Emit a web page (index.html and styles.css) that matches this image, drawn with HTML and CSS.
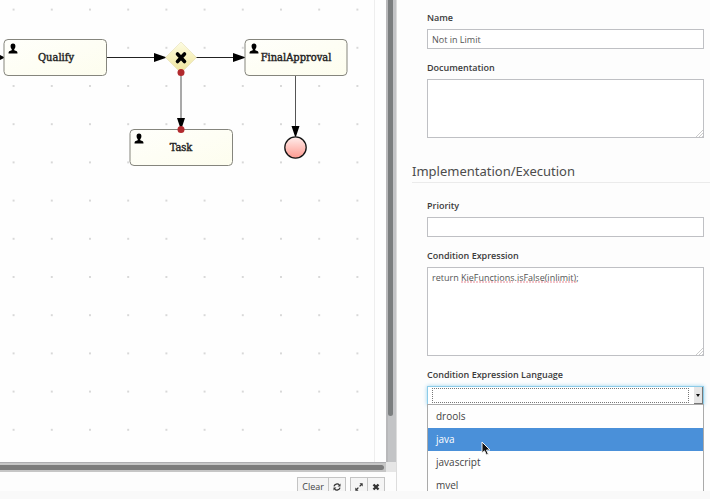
FILE: index.html
```html
<!DOCTYPE html>
<html lang="en">
<head>
<meta charset="utf-8">
<title>Process Designer</title>
<link rel="stylesheet" href="styles.css">
</head>
<body>
<div class="app">
  <main class="designer">
    <div class="viewport">
      <svg class="canvas" role="img" aria-label="Process diagram">
        <defs>
          <pattern id="grid" x="-6" y="-10" width="38.2" height="38.2" patternUnits="userSpaceOnUse">
            <circle cx="19.6" cy="19.6" r="0.8" fill="#a8a8a8"/>
          </pattern>
          <linearGradient id="task" x1="0" y1="0" x2="1" y2="1">
            <stop offset="0" stop-color="#fffffb"/><stop offset="1" stop-color="#fdfdee"/>
          </linearGradient>
          <linearGradient id="gate" x1="0" y1="0" x2="0" y2="1">
            <stop offset="0" stop-color="#fdfce2"/><stop offset="1" stop-color="#efe49a"/>
          </linearGradient>
          <linearGradient id="end" x1="0" y1="0" x2="0" y2="1">
            <stop offset="0" stop-color="#ffeeec"/><stop offset="1" stop-color="#ff9a90"/>
          </linearGradient>
          <symbol id="user" viewBox="0 0 10 11">
            <path d="M5 0.4C6.7 0.4 7.6 1.7 7.4 3.4C7.3 4.7 6.7 5.6 6.2 6.2L6.3 7.2L8.8 8.3Q9.5 8.7 9.5 10.4H0.5Q0.5 8.7 1.2 8.3L3.7 7.2L3.8 6.2C3.3 5.6 2.7 4.7 2.6 3.4C2.4 1.7 3.3 0.4 5 0.4Z"/>
          </symbol>
        </defs>
        <rect width="100%" height="100%" fill="url(#grid)"/>
        <path class="page-edge" d="M374.500 0V462"/>
        <g class="flow">
          <path d="M107 57.500H156M196 57.500H236"/>
          <path class="soft" d="M181 74V120M295.500 76V128"/>
        </g>
        <g>
          <path d="M154 53L167 57.500L154 62ZM233 53L246 57.500L233 62ZM0 55L5 57.500L0 60Z"/>
          <path d="M177 118H185L181 130ZM291.500 126H299.500L295.500 138Z"/>
        </g>
        <g class="node">
          <rect x="4" y="39.500" width="102.500" height="36" rx="4"/>
          <rect x="245" y="39.500" width="102" height="36" rx="4"/>
          <rect x="130" y="129.500" width="102.500" height="36" rx="4"/>
        </g>
        <use href="#user" x="8" y="43" width="10" height="11"/>
        <use href="#user" x="249" y="43" width="10" height="11"/>
        <use href="#user" x="134" y="133" width="10" height="11"/>
        <path class="gateway" d="M181 42L196.500 57.500L181 73L165.500 57.500Z"/>
        <path class="cross" d="M177.500 54L184.500 61.500M184.500 54L177.500 61.500"/>
        <circle class="docker" cx="181" cy="72.500" r="3.500"/>
        <circle class="docker" cx="181" cy="129.500" r="3.500"/>
        <circle class="end-event" cx="295.500" cy="147.500" r="10.700"/>
        <g class="node-label">
          <text x="56" y="61">Qualify</text>
          <text x="296" y="61">FinalApproval</text>
          <text x="181" y="151">Task</text>
        </g>
      </svg>
      <div class="track-y"><div class="thumb-y"></div></div>
      <div class="track-x"><div class="thumb-x"></div></div>
      <div class="corner"></div>
    </div>
    <div class="toolbar">
      <div class="group">
        <button type="button">Clear</button>
        <button type="button" aria-label="Refresh">
          <svg width="8" height="8" viewBox="0 0 8 8"><path class="icon-line" d="M1 3.400A3.100 3.100 0 0 1 6.300 1.900M7 4.600A3.100 3.100 0 0 1 1.700 6.100"/><path d="M7.500 0.500V3.400H4.600ZM0.500 7.500V4.600H3.400Z"/></svg>
        </button>
      </div>
      <div class="group">
        <button type="button" aria-label="Expand">
          <svg width="8" height="8" viewBox="0 0 8 8"><path class="icon-line" d="M1.500 6.500L3.400 4.600M4.600 3.400L6.500 1.500"/><path d="M4.500 0.300H7.700V3.500ZM0.300 4.500V7.700H3.500Z"/></svg>
        </button>
        <button type="button" aria-label="Close">
          <svg width="8" height="8" viewBox="0 0 8 8"><path class="icon-cross" d="M1.500 1.500L6.500 6.500M6.500 1.500L1.500 6.500"/></svg>
        </button>
      </div>
    </div>
  </main>
  <aside class="properties">
    <section class="fields">
      <label for="name">Name</label>
      <input id="name" type="text" value="Not in Limit">
      <label for="doc">Documentation</label>
      <div class="area"><textarea id="doc" class="short"></textarea><span class="grip"></span></div>
    </section>
    <h2>Implementation/Execution</h2>
    <section class="fields">
      <label for="priority">Priority</label>
      <input id="priority" type="text">
      <label for="condition">Condition Expression</label>
      <div class="area">
        <textarea id="condition" class="tall" spellcheck="false">return KieFunctions.isFalse(inlimit);</textarea>
        <svg class="spelling" width="118" height="2" aria-hidden="true"><path d="M0 1H52M56 1H116"/></svg>
        <span class="grip"></span>
      </div>
      <label for="language">Condition Expression Language</label>
      <div class="combo">
        <select id="language"><option></option><option>drools</option><option>java</option><option>javascript</option><option>mvel</option></select>
        <span class="focus-ring"></span>
        <span class="arrow"></span>
        <ul class="menu" role="listbox" aria-label="Condition Expression Language">
          <li role="option">drools</li>
          <li role="option" class="active" aria-selected="true">java
            <svg class="pointer" width="10" height="15" viewBox="0 0 10 15" aria-hidden="true"><path d="M1 1V12L3.500 9.800L5.500 14L7.300 13.200L5.500 9H9Z"/></svg>
          </li>
          <li role="option">javascript</li>
          <li role="option">mvel</li>
        </ul>
      </div>
    </section>
  </aside>
</div>
</body>
</html>
```

FILE: styles.css
```css
* { box-sizing: border-box; }

body {
  margin: 0;
  height: 100vh;
  padding-bottom: 8px;
  overflow: hidden;
  background: #f9f9f9;
  color: #444;
  font-family: "Open Sans", "Noto Sans", sans-serif;
  font-size: 9px;
}

.app {
  display: flex;
  height: 100%;
  overflow: hidden;
  background: #fdfdfd;
}

.designer {
  flex: 1;
  min-width: 0;
  display: flex;
  flex-direction: column;
  border-right: 1px solid #ddd;
}

.viewport {
  flex: 1;
  min-height: 0;
  display: grid;
  grid-template: minmax(0, 1fr) 10px / minmax(0, 1fr) 10px;
}

.canvas { width: 100%; height: 100%; background: #fefefe; }
.page-edge { stroke: #eee; }
.flow { stroke: #222; fill: none; }
.flow .soft { stroke: #555; }
.node { fill: url(#task); stroke: #85857d; }
.gateway { fill: url(#gate); stroke: #e0d9ae; stroke-width: 0.5; }
.cross { stroke: #000; stroke-width: 3.6; stroke-linecap: round; }
.docker { fill: #b22a2e; }
.end-event { fill: url(#end); stroke: #161616; stroke-width: 1.3; }

.node-label {
  fill: #222;
  stroke: #222;
  stroke-width: 0.4;
  font-family: "DejaVu Serif Condensed", "DejaVu Serif", serif;
  font-size: 11px;
  text-anchor: middle;
}

.track-y { background: #c3c4c6; border-left: 2px solid #b8b8ba; padding-right: 3px; }
.thumb-y { height: 90%; background: #7b7e7f; border-radius: 0 0 3px 3px; }
.track-x { background: #c6c6c6; border-top: 1px solid #adadb0; padding: 2px 2px 2px 0; }
.thumb-x { height: 100%; background: #7c7c7c; border-radius: 0 3px 3px 0; }
.corner { background: #e6e6e6; }

.toolbar {
  display: flex;
  justify-content: flex-end;
  gap: 4px;
  height: 19px;
  padding: 5px 11px 0 0;
  overflow: hidden;
}

.group { display: flex; }

button {
  display: flex;
  align-items: center;
  justify-content: center;
  height: 18px;
  min-width: 17px;
  padding: 0 4px;
  border: 1px solid #c4c4c4;
  border-bottom: 0;
  background: #f5f5f5;
  color: #444;
  font: 9px/12px "Open Sans", sans-serif;
}

button + button { border-left: 0; }
button svg { flex: none; fill: #333; }
.icon-line { fill: none; stroke: #333; stroke-width: 1.3; }
.icon-cross { stroke: #333; stroke-width: 2.4; }

.properties {
  flex: 0 0 313px;
  padding: 12px 0 0 15px;
  overflow: hidden;
}

.fields { padding: 0 6px 0 15px; }

label {
  display: block;
  height: 12px;
  margin-bottom: 5px;
  font-weight: 600;
  line-height: 12px;
  color: #3b3b3b;
}

input,
textarea,
select {
  display: block;
  width: 100%;
  margin: 0;
  border: 1px solid #bfc0c4;
  border-radius: 0;
  outline: 0;
  background: #fff;
  color: #555;
  font: 9px/12px "Open Sans", sans-serif;
}

input { height: 20px; padding: 0 4px; margin-bottom: 13px; }
textarea { padding: 4px; resize: none; }
.area { position: relative; margin-bottom: 13px; }
.short { height: 59px; }
.tall { height: 89px; }

.grip {
  position: absolute;
  right: 1px;
  bottom: 1px;
  width: 8px;
  height: 8px;
  background: repeating-linear-gradient(135deg, #ccc 0 1px, #fff 1px 2px);
  clip-path: polygon(100% 0, 100% 100%, 0 100%);
}

.spelling { position: absolute; left: 34px; top: 14px; }
.spelling path { stroke: #e88a96; stroke-dasharray: 2 1; }

h2 {
  margin: 23px 0 17px;
  padding-bottom: 1px;
  border-bottom: 1px solid #ebebeb;
  font-family: "Noto Sans", "Open Sans", sans-serif;
  font-size: 13px;
  font-weight: 400;
  line-height: 20px;
  color: #4c4c4c;
}

.combo { position: relative; }

select {
  height: 19px;
  appearance: none;
  border-color: #8ccbe8;
  box-shadow: 0 0 4px #9bd3ee;
}

.focus-ring {
  position: absolute;
  inset: 2px 15px 2px 5px;
  border: 1px dotted #777;
  pointer-events: none;
}

.arrow {
  position: absolute;
  top: 1px;
  right: 1px;
  width: 9px;
  height: 17px;
  background: #e6e6e6;
  border: solid #777;
  border-width: 0 1px 1px 0;
  pointer-events: none;
}

.arrow::after {
  content: "";
  position: absolute;
  left: 2px;
  top: 7px;
  border: solid transparent;
  border-width: 3px 2px 0;
  border-top-color: #111;
}

.menu {
  position: absolute;
  top: 100%;
  left: 0;
  right: 0;
  margin: 0;
  padding: 0;
  list-style: none;
  border: solid #aaa;
  border-width: 0 1px;
  background: #fefefe;
  font-size: 10px;
  line-height: 23px;
  box-shadow: 0 -1px #aaa;
}

.menu li { position: relative; height: 23px; padding-left: 8px; }
.menu .active { background: #4a90d9; color: #fff; }

.pointer {
  position: absolute;
  left: 53px;
  top: 13px;
  z-index: 1;
  fill: #111;
  stroke: #eee;
  stroke-width: 1;
}
```
